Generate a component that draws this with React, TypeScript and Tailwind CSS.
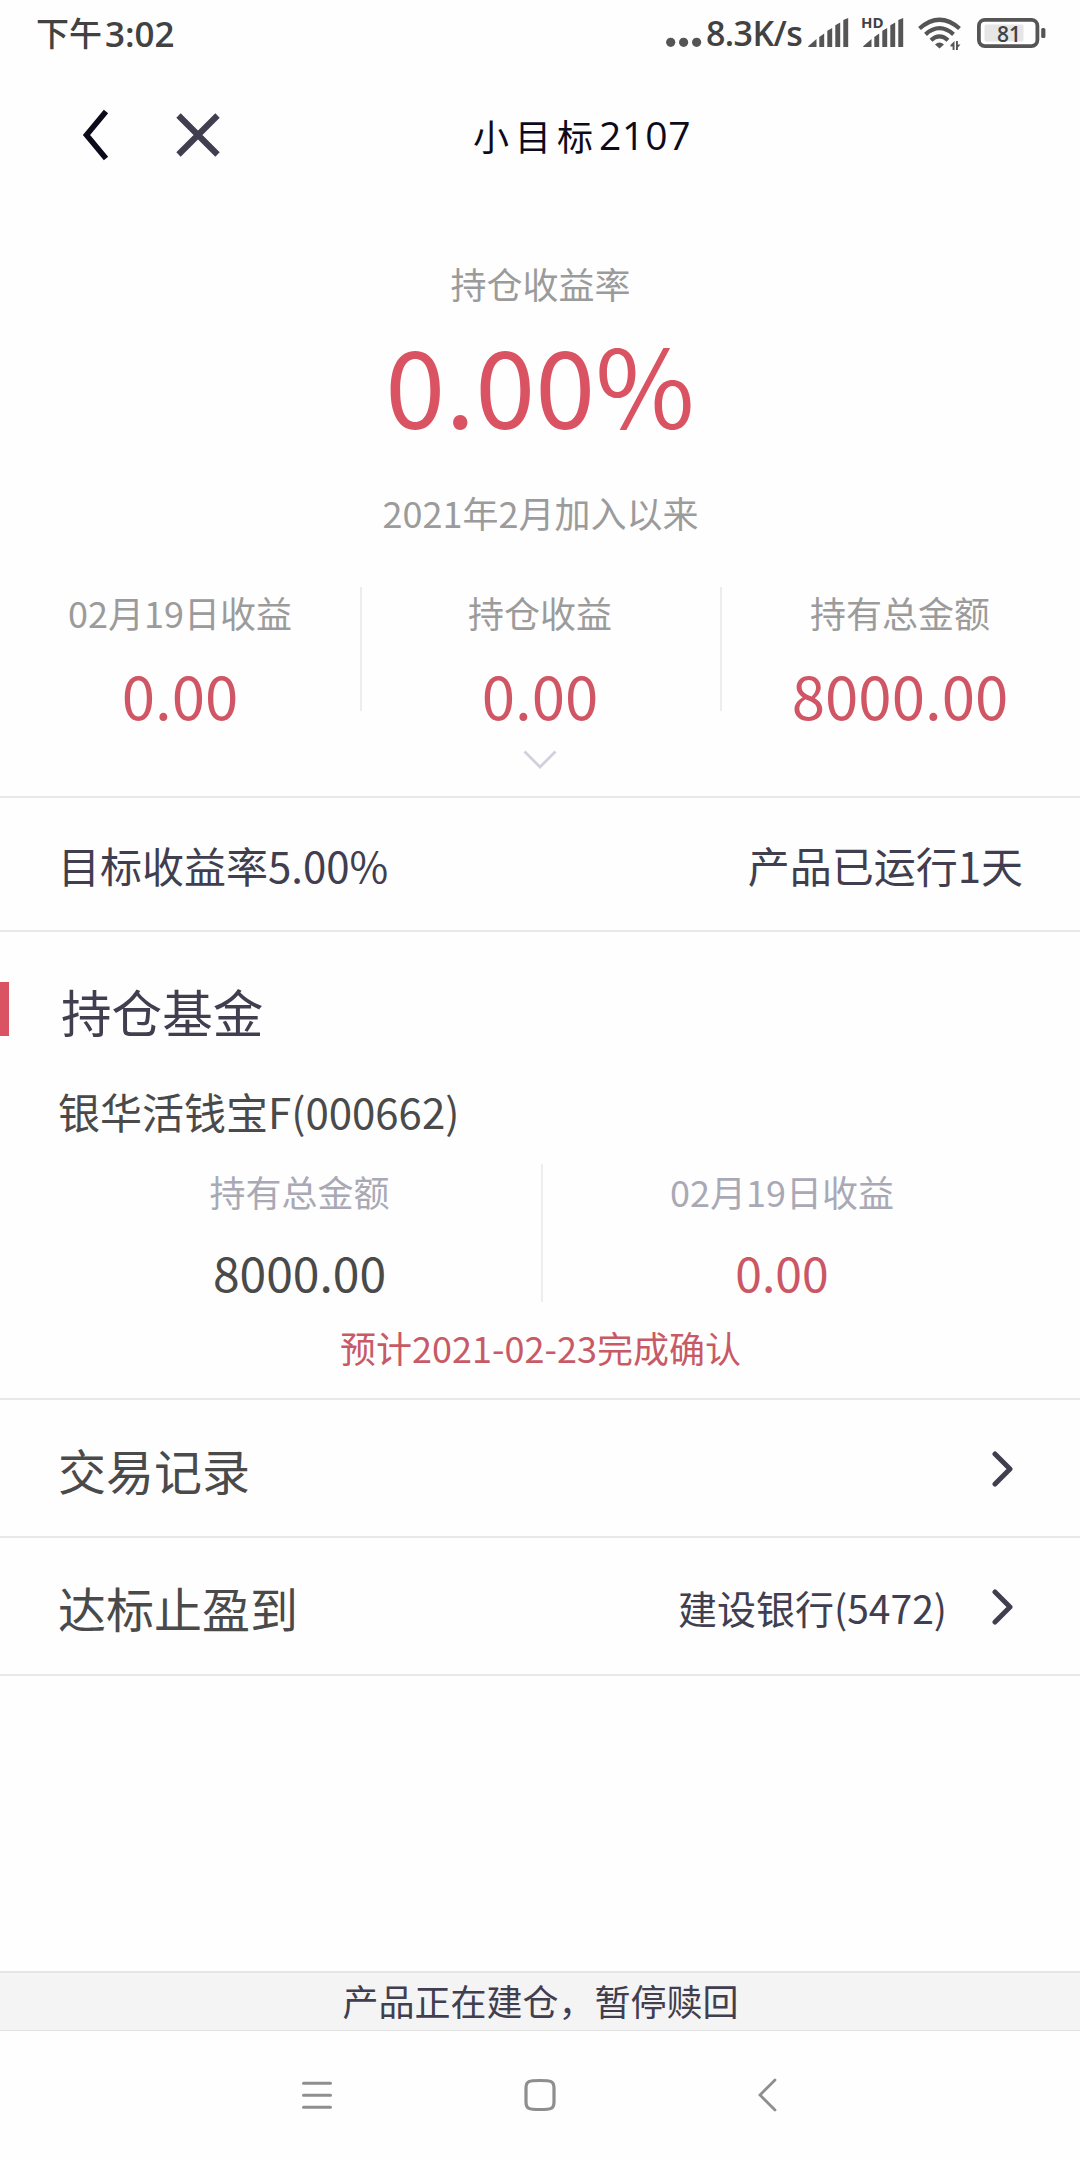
import React from "react";

const CJK = "font-['Noto_Sans_CJK_SC',sans-serif]";
const LATIN = "font-['Open_Sans','Noto_Sans_CJK_SC',sans-serif]";

function SignalBars() {
  return (
    <svg width="41" height="30" viewBox="0 0 41 30" fill="#555" className="block">
      <path d="M0 28.5 L1 27.5 L8.5 21 V29 H0.5 Z" />
      <path d="M11.3 19 L16.2 15.5 V29 H11.3 Z" />
      <path d="M19.3 12.8 L24.2 10 V29 H19.3 Z" />
      <path d="M27.3 7.2 L32.2 4.5 V29 H27.3 Z" />
      <path d="M35.3 2 L40.2 0 V29 H35.3 Z" />
    </svg>
  );
}

function StatusBar() {
  return (
    <div className="flex h-[66px] items-start text-[#424242]">
      <div className={`${CJK} flex h-[66px] pl-[36px] text-[33px] leading-[65px] font-medium`}>
        <span>下午</span>
        <span className="ml-[3px] font-['Open_Sans'] text-[35px] leading-[67px] font-semibold">3:02</span>
      </div>
      <div className="ml-auto flex h-[66px]">
        <svg width="36" height="66" viewBox="0 0 36 66" fill="#555">
          <circle cx="4.7" cy="42.3" r="4.6" />
          <circle cx="17.6" cy="42.3" r="4.6" />
          <circle cx="30.6" cy="42.3" r="4.6" />
        </svg>
        <span className="ml-[4px] w-[102px] font-['Open_Sans'] text-[34px] leading-[67px] font-semibold tracking-[-0.6px] whitespace-nowrap">
          8.3K/s
        </span>
        <div className="mt-[18px] w-[41px]">
          <SignalBars />
        </div>
        <div className="relative mt-[18px] ml-[14px] w-[41px]">
          <SignalBars />
          <span className="absolute -top-[5px] -left-[2px] font-['Open_Sans'] text-[15px] leading-[18px] font-bold">HD</span>
        </div>
        <svg width="44" height="66" viewBox="0 0 44 66" className="ml-[14px]">
          <g fill="none" stroke="#555" strokeWidth="4.2">
            <path d="M1.5 28.5 Q21.5 11 41.5 28.5" />
            <path d="M7.5 34.3 Q21.5 22 35.5 34.3" />
            <path d="M13 40.2 Q21.5 32.5 30 40.2" />
          </g>
          <path d="M17 44.5 Q21.5 40.5 26 44.5 L21.5 48.5 Z" fill="#555" />
          <g fill="#555">
            <path d="M32.5 45 L36.5 41 V50 H34.6 V46.5 H32.5 Z" />
            <path d="M38 41 H39.9 V44.5 H42.5 L39.9 47.5 V50 H38 Z" />
          </g>
        </svg>
        <div className="relative mt-[18px] ml-[15px] h-[30px] w-[69px]">
          <svg width="69" height="30" viewBox="0 0 69 30">
            <rect x="7.5" y="6.5" width="39" height="17" rx="2" fill="#e6e6e6" />
            <rect x="1.9" y="1.9" width="58.5" height="26.2" rx="6" fill="none" stroke="#555" strokeWidth="3.8" />
            <rect x="64.2" y="10" width="4.2" height="10" rx="1.5" fill="#555" />
          </svg>
          <span className="absolute top-0 left-[1px] w-[62px] text-center font-['Open_Sans'] text-[21px] leading-[32px] font-semibold">
            81
          </span>
        </div>
        <div className="w-[34px]" />
      </div>
    </div>
  );
}

function Header() {
  return (
    <div className="flex h-[138px] items-center">
      <svg width="28" height="54" viewBox="0 0 28 54" className="ml-[82px]" fill="none" stroke="#0d0b1a" strokeWidth="5.6">
        <path d="M24 3.5 L4.5 27 L24 50.5" />
      </svg>
      <svg width="44" height="44" viewBox="0 0 44 44" className="ml-[66px]" fill="none" stroke="#413e50" strokeWidth="6.2">
        <path d="M2.5 2.5 L41.5 41.5 M41.5 2.5 L2.5 41.5" />
      </svg>
      <div className="ml-[253px] flex text-[#0d0b1a]">
        <span className={`${CJK} text-[36px] leading-[54px] tracking-[6px]`}>小目标</span>
        <span className={`${LATIN} text-[39px] leading-[54px] tracking-[0.8px]`}>2107</span>
      </div>
    </div>
  );
}

function Stat({ label, value, last }: { label: string; value: string; last?: boolean }) {
  return (
    <div className="relative flex flex-1 flex-col items-center">
      <span className="mt-[4px] h-[42px] text-[36px] leading-[42px] text-[#9b9b9b]">{label}</span>
      <span className="mt-[27px] h-[68px] text-[60px] leading-[68px] text-[#d05665]">{value}</span>
      {!last && <i className="absolute top-0 -right-[2px] h-[124px] w-[2px] bg-[#ededed]" />}
    </div>
  );
}

function ChevronRight() {
  return (
    <svg width="22" height="36" viewBox="0 0 22 36" fill="none" stroke="#413e50" strokeWidth="5" strokeLinecap="round" strokeLinejoin="round">
      <path d="M3 3 L18 18 L3 33" />
    </svg>
  );
}

export default function App() {
  return (
    <div className={`${CJK} flex h-[2160px] w-[1080px] flex-col overflow-hidden bg-[#fefefe]`}>
      <StatusBar />
      <Header />

      <section className="flex h-[594px] flex-col border-b-2 border-[#e8e8e8] pt-[57px]">
        <div className="h-[44px] pl-px text-center text-[36px] leading-[44px] text-[#9b9b9b]">持仓收益率</div>
        <div className="mt-[17px] h-[120px] text-center text-[108px] leading-[120px] text-[#da5362]">0.00%</div>
        <div className="mt-[48px] h-[44px] pl-px text-center text-[36px] leading-[44px] text-[#9b9b9b]">2021年2月加入以来</div>
        <div className="mt-[53px] flex h-[141px]">
          <Stat label="02月19日收益" value="0.00" />
          <Stat label="持仓收益" value="0.00" />
          <Stat label="持有总金额" value="8000.00" last />
        </div>
        <svg width="34" height="20" viewBox="0 0 34 20" className="mx-auto mt-[22px]" fill="none" stroke="#d0d1dd" strokeWidth="2.8">
          <path d="M1.5 1.5 L17 17 L32.5 1.5" />
        </svg>
      </section>

      <section className="flex h-[134px] items-center justify-between border-b-2 border-[#e8e8e8] pt-[2px] pr-[57px] pl-[58px] text-[42px] leading-[60px] text-[#413e50]">
        <span>目标收益率5.00%</span>
        <span>产品已运行1天</span>
      </section>

      <section className="h-[468px] border-b-2 border-[#e8e8e8] pt-[50px]">
        <div className="flex h-[54px] items-center">
          <i className="h-[54px] w-[9px] bg-[#da5362]" />
          <h2 className="ml-[52px] pt-[4px] text-[50.6px] leading-[56px] text-[#413e50]">持仓基金</h2>
        </div>
        <div className="mt-[45px] h-[60px] pl-[58px] text-[42px] leading-[60px] text-[#4a4a4a]">银华活钱宝F(000662)</div>
        <div className="mr-[59px] ml-[58px] mt-[23px] flex h-[138px]">
          <div className="flex w-[485px] flex-col items-center border-r-2 border-[#ededed] pt-[5px]">
            <span className="h-[44px] text-[36px] leading-[44px] text-[#a9a9b6]">持有总金额</span>
            <span className="mt-[28px] h-[60px] text-[48px] leading-[60px] text-[#4a4a4a]">8000.00</span>
          </div>
          <div className="flex flex-1 flex-col items-center pt-[5px]">
            <span className="h-[44px] text-[36px] leading-[44px] text-[#a9a9b6]">02月19日收益</span>
            <span className="mt-[28px] h-[60px] text-[48px] leading-[60px] text-[#cb5765]">0.00</span>
          </div>
        </div>
        <div className="mt-[23px] h-[44px] pl-px text-center text-[36px] leading-[44px] text-[#c85a66]">预计2021-02-23完成确认</div>
      </section>

      <section className="flex h-[138px] items-center border-b-2 border-[#e8e8e8] pr-[66px] pl-[58px]">
        <span className="pt-[2px] text-[48px] leading-[60px] text-[#4a4a4a]">交易记录</span>
        <span className="ml-auto pt-[2px]">
          <ChevronRight />
        </span>
      </section>

      <section className="flex h-[138px] items-center border-b-2 border-[#e8e8e8] pr-[66px] pl-[58px]">
        <span className="pt-[2px] text-[48px] leading-[60px] text-[#4a4a4a]">达标止盈到</span>
        <span className="ml-auto pt-[2px] text-[39px] leading-[58px] text-[#413e50]">建设银行(5472)</span>
        <span className="ml-[45px] pt-[2px]">
          <ChevronRight />
        </span>
      </section>

      <footer className="mt-auto">
        <div className="h-[60px] border-t-2 border-b border-t-[#e5e5e5] border-b-[#e0e0e0] bg-[#f4f4f4] pl-px text-center text-[36px] leading-[55px] text-[#413e50]">
          产品正在建仓，暂停赎回
        </div>
        <nav className="flex h-[129px] items-center pb-[2px] pl-[301px]">
          <svg width="32" height="34" viewBox="0 0 32 34" fill="none" stroke="#8e8e8e" strokeWidth="3" strokeLinecap="round">
            <path d="M2.5 5.2 H29.5 M2.5 17.2 H29.5 M2.5 29.2 H29.5" />
          </svg>
          <svg width="34" height="34" viewBox="0 0 34 34" className="ml-[190px]" fill="none" stroke="#8e8e8e" strokeWidth="3.2">
            <path d="M17 2.5 C28 2.5 31 3 31 10 V24 C31 31 28 31.5 17 31.5 C6 31.5 3 31 3 24 V10 C3 3 6 2.5 17 2.5 Z" />
          </svg>
          <svg width="22" height="34" viewBox="0 0 22 34" className="ml-[200px]" fill="none" stroke="#8e8e8e" strokeWidth="2.8" strokeLinecap="round">
            <path d="M18 2 L3 17 L18 32" />
          </svg>
        </nav>
      </footer>
    </div>
  );
}
